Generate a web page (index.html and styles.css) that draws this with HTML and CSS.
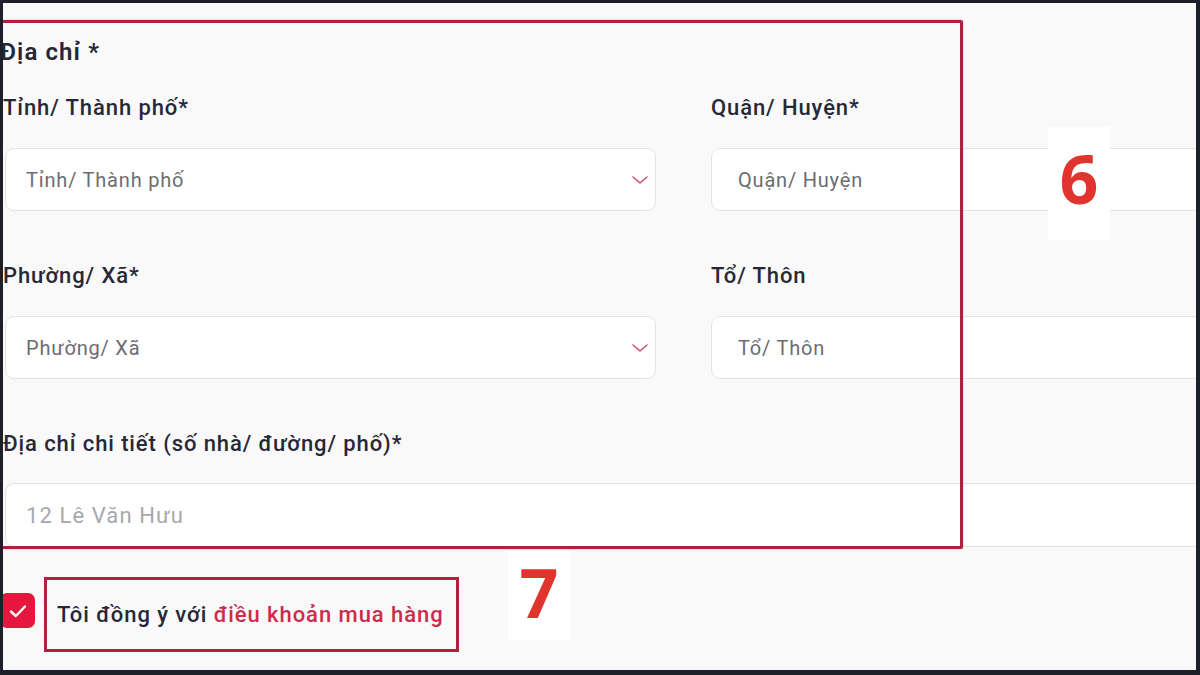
FILE: index.html
```html
<!DOCTYPE html>
<html lang="vi">
<head>
<meta charset="utf-8">
<title>Địa chỉ</title>
<link rel="stylesheet" href="styles.css">
</head>
<body>
<div class="screen">
  <div class="form">
    <h2 class="section-title">Địa chỉ *</h2>
    <div class="grid">
      <div class="field">
        <label class="label">Tỉnh/ Thành phố*</label>
        <div class="input select">
          <span class="placeholder">Tỉnh/ Thành phố</span>
          <svg class="chevron" width="18" height="10" viewBox="0 0 18 10"><polyline points="2,2 9,8 16,2" fill="none" stroke="#c9506f" stroke-width="1.6" stroke-linecap="round" stroke-linejoin="round"/></svg>
        </div>
      </div>
      <div class="field col2">
        <label class="label">Quận/ Huyện*</label>
        <div class="input"><span class="placeholder">Quận/ Huyện</span></div>
      </div>
      <div class="field">
        <label class="label">Phường/ Xã*</label>
        <div class="input select">
          <span class="placeholder">Phường/ Xã</span>
          <svg class="chevron" width="18" height="10" viewBox="0 0 18 10"><polyline points="2,2 9,8 16,2" fill="none" stroke="#c9506f" stroke-width="1.6" stroke-linecap="round" stroke-linejoin="round"/></svg>
        </div>
      </div>
      <div class="field col2">
        <label class="label">Tổ/ Thôn</label>
        <div class="input"><span class="placeholder">Tổ/ Thôn</span></div>
      </div>
      <div class="field full">
        <label class="label">Địa chỉ chi tiết (số nhà/ đường/ phố)*</label>
        <div class="input tall"><span class="placeholder light">12 Lê Văn Hưu</span></div>
      </div>
    </div>
    <div class="agree">
      <span class="checkbox">
        <svg width="18" height="14" viewBox="0 0 18 14"><polyline points="2,7.5 6.8,12 16,2.5" fill="none" stroke="#fff" stroke-width="2.4" stroke-linecap="round" stroke-linejoin="round"/></svg>
      </span>
      <span class="agree-text">Tôi đồng ý với <span class="link">điều khoản mua hàng</span></span>
    </div>
  </div>
  <div class="annot-box"></div>
  <div class="badge badge-six">6</div>
  <div class="badge badge-seven">7</div>
  <div class="frame"></div>
</div>
</body>
</html>
```

FILE: styles.css
```css
html, body {
  margin: 0;
  padding: 0;
}
body {
  width: 1200px;
  height: 675px;
  overflow: hidden;
  font-family: Roboto, "Noto Sans", "DejaVu Sans", sans-serif;
}
.screen {
  position: relative;
  width: 1200px;
  height: 675px;
  background: #f9f9fa;
  overflow: hidden;
}
.frame {
  position: absolute;
  inset: 0;
  border-style: solid;
  border-color: #1d2029;
  border-width: 3px 4px 5px 3px;
  pointer-events: none;
}
.form {
  width: 1260px;
  padding-top: 38px;
}
.section-title {
  margin: 0 0 29px 0;
  padding-left: 0;
  font-size: 24px;
  line-height: 28px;
  font-weight: 600;
  letter-spacing: 1.1px;
  color: #262735;
}
.grid {
  display: grid;
  grid-template-columns: 653px 560px;
  column-gap: 55px;
  row-gap: 52px;
  padding-left: 3px;
}
.field.full {
  grid-column: 1 / 3;
}
.label {
  display: block;
  margin-bottom: 27px;
  font-size: 22px;
  line-height: 26px;
  font-weight: 500;
  letter-spacing: 0.9px;
  color: #272836;
}
.field.full .label {
  margin-bottom: 26px;
}
.input {
  box-sizing: border-box;
  height: 63px;
  margin-left: 2px;
  background: #fff;
  border: 1.5px solid #e3e3e5;
  border-radius: 9px;
  display: flex;
  align-items: center;
  justify-content: space-between;
  padding: 0 6px 0 20px;
}
.field.col2 .input {
  margin-left: 0;
  padding-left: 26px;
}
.input.tall {
  height: 64px;
}
.placeholder {
  font-size: 20px;
  letter-spacing: 0.8px;
  color: #6c6c70;
}
.placeholder.light {
  color: #a8a8ac;
  font-size: 22px;
  letter-spacing: 1.1px;
}
.chevron {
  display: block;
}
.agree {
  display: flex;
  align-items: center;
  margin-top: 30px;
}
.checkbox {
  box-sizing: border-box;
  width: 35px;
  height: 35px;
  margin-bottom: 8px;
  margin-right: 9px;
  background: #e5173f;
  border-radius: 7px;
  display: flex;
  align-items: center;
  justify-content: center;
}
.agree-text {
  box-sizing: border-box;
  height: 75px;
  display: flex;
  align-items: center;
  padding: 0 12px 0 10px;
  border: 3px solid #b3213f;
  font-size: 22px;
  font-weight: 500;
  letter-spacing: 0.95px;
  color: #272836;
  white-space: pre;
}
.link {
  color: #cf2a4b;
}
.annot-box {
  position: absolute;
  left: -10px;
  top: 20px;
  width: 973px;
  height: 529px;
  box-sizing: border-box;
  border: 3px solid #b1203e;
  border-radius: 2px;
  box-shadow: 0 0 2px rgba(235, 90, 120, 0.6);
  pointer-events: none;
}
.badge {
  position: absolute;
  background: #fff;
  display: flex;
  align-items: center;
  justify-content: center;
  font-family: "Open Sans", "Liberation Sans", sans-serif;
  font-weight: 700;
  font-size: 68px;
  line-height: 1;
  color: #e0342d;
}
.badge-six {
  left: 1048px;
  top: 127px;
  width: 62px;
  height: 113px;
  padding-bottom: 12px;
  box-sizing: border-box;
}
.badge-seven {
  left: 508px;
  top: 551px;
  width: 62px;
  height: 89px;
  padding-bottom: 8px;
  box-sizing: border-box;
}
```
